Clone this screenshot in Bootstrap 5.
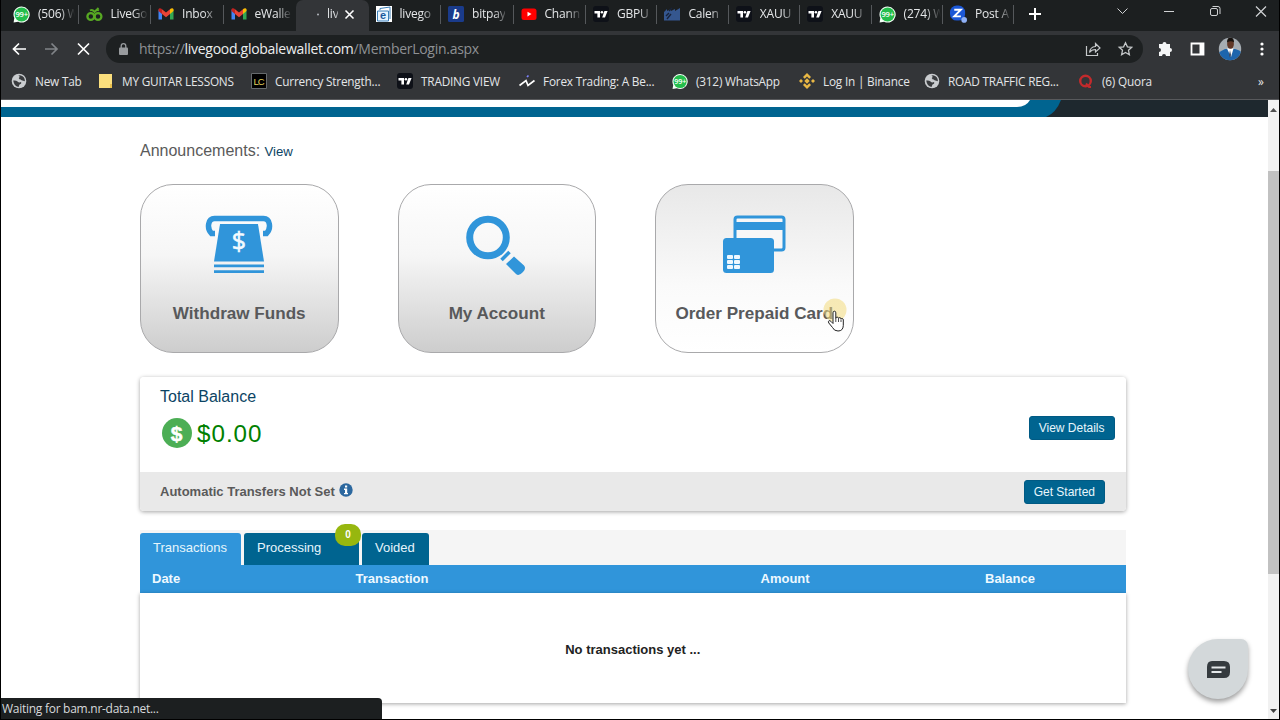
<!DOCTYPE html>
<html lang="en">
<head>
<meta charset="utf-8">
<title>eWallet</title>
<link href="https://cdn.jsdelivr.net/npm/bootstrap@5.3.0/dist/css/bootstrap.min.css" rel="stylesheet">
<style>
html,body{height:720px;overflow:hidden}
body{background:#000;font-family:"Liberation Sans",Arial,sans-serif;color:#5a5a5a;line-height:1.2}
.win{width:1278px;height:719px;margin-left:1px;background:#fff}
.chrome{font-family:"Open Sans","Noto Sans",sans-serif;color:#e4e6e8;background:#333538;height:99px}
.chrome svg,.chrome .ico{flex:none}
.strip{height:31px;background:#1c1f20;padding-left:5px}
.btab{width:72.5px;height:31px;padding-left:7px;gap:8px;font-size:12px;letter-spacing:-.2px;position:relative;flex:none;padding-bottom:3px}
.btab:nth-child(n+9){width:71.4px}
.btab .ttl{white-space:nowrap;-webkit-mask-image:linear-gradient(90deg,#000 22px,transparent 37px);mask-image:linear-gradient(90deg,#000 22px,transparent 37px)}
.btab.sep::after{content:"";position:absolute;right:0;top:5px;width:1px;height:19px;background:#55585b}
.btab.on{background:#333538;border-radius:7px 7px 0 0}
.btab.on .ttl{margin-right:-2px;-webkit-mask-image:linear-gradient(90deg,#000 7px,transparent 17px);mask-image:linear-gradient(90deg,#000 7px,transparent 17px)}
.omni{height:35px;padding-top:1px}
.url{width:1037px;height:28px;border-radius:14px;background:#1d2021;margin-left:15px;font-size:14px;padding:0 10px 0 13px;color:#8e9194}
.url .addr{letter-spacing:-.28px;margin-left:11px;white-space:nowrap}
.url b{font-weight:400;color:#eceeef}
.marks{height:33px;padding:0 0 3px 10px;display:grid;grid-template-columns:87px 153px 146px 122px 153px 127px 125px 154px 180px auto;align-items:center;font-size:11.8px;white-space:nowrap;letter-spacing:-.2px}
.bm{display:flex;align-items:center}
.bm svg{width:16px;margin-right:8px}
.edge{height:1px;background:#58595c}
.view{height:619px}
.banner{height:17px;display:block}
.banner .night{fill:#1e282e}
.site{width:985.5px;margin-left:139px}
.ann{height:67px;padding-top:24px;font-size:16px}
.lnk{font-size:13.2px;color:#0c4464;text-decoration:none}
.tile{width:198.5px;height:169px;border:1px solid #a9a9ab;border-radius:33px;background:linear-gradient(#fff,#f6f6f6 42%,#cdcdcd);padding-top:29px;font-weight:700;font-size:17.1px;white-space:nowrap;color:#58595b}
.tile.flip{background:linear-gradient(#e8e8e8,#fafafa 60%,#fff)}
.tile svg{height:62px;display:block;margin-bottom:28px;margin-left:-1px}
.bal{margin-top:24px;height:134px;border-radius:4px;box-shadow:0 1px 4px rgba(0,0,0,.36);overflow:hidden}
.bal .up{height:95px;padding:10px 11px 0 20px;background:#fff}
.bal .low{height:39px;padding:1px 20.500px 0 20px;background:#e9e9e9;font-size:13px;font-weight:700}
.money{font-size:24.2px;letter-spacing:1px;color:#008000;gap:5px;margin-top:12px;margin-left:2px}
.pill{--bs-btn-bg:#006490;--bs-btn-color:#e8f6fc;--bs-btn-border-color:#005a84;--bs-btn-hover-bg:#006490;padding:0 9px;font-size:12px;line-height:21px;border-radius:3px;height:24px}
.details{margin-top:29px}
.txn{margin-top:19px}
.tabsrow{background:#f5f5f5;height:35px;padding-top:3px;gap:3px}
.nt{height:32px;background:#006490;color:#e6f5fc;font-size:13px;padding-left:13px;padding-top:7px;border-radius:3px 3px 0 0;position:relative}
.nt.cur{background:#3095da}
.cnt{position:absolute;right:-2px;top:-9px;width:26px;height:22px;border-radius:10px;background:#97b70f;color:#fff;font-size:10px;font-weight:700;text-align:center;line-height:22px}
.th-row{height:28px;background:#3095da;color:#eef9ff;font-weight:700;font-size:13px;display:grid;grid-template-columns:203.5px 405px 224.5px auto;align-items:center;padding-left:12px}
.empty{height:110px;font-size:13px;font-weight:700;color:#222;padding-top:49px;box-shadow:0 1px 4px rgba(0,0,0,.36);text-align:center}
.sbar{width:11px;background:#f1f1f1;padding-top:6px}
.thumb{height:403px;background:#c1c1c1;margin-top:57px}
.status{position:absolute;left:1px;top:698px;width:381px;height:21px;background:#1c1f20;color:#d8dadc;border-radius:0 4px 0 0;font:12px/22px "Open Sans","Noto Sans",sans-serif;padding-left:1px;letter-spacing:-.27px}
.chat{position:absolute;left:1188px;top:639px;width:60px;height:60px;border-radius:30px 7px 30px 30px;background:#d3d8da;box-shadow:0 3px 5px rgba(0,0,0,.38);padding-top:2px}
.hand{position:absolute;left:823px;top:298px}
</style>
</head>
<body>
<svg width="0" height="0" class="position-absolute">
<defs>
<symbol id="wa" viewBox="0 0 17 16"><path d="M8.5 0a8 8 0 1 1-3.3 15.2L.6 16l.7-4.4A8 8 0 0 1 8.5 0z" fill="#f4fff6"/><circle cx="8.6" cy="8" r="7" fill="#24bd4c"/><text x="8.7" y="10.800" font-family="Open Sans" font-size="7.6" font-weight="600" text-anchor="middle" textLength="12.500" fill="#fff">99+</text></symbol>
<symbol id="gm" viewBox="0 0 16 16"><path d="M.5 3.5v10H4V7z" fill="#4285f4"/><path d="M15.5 3.500v10H12V7z" fill="#34a853"/><path d="M.5 5V3.500Q1 1.500 3 2.500L4 3.300V8z" fill="#c5221f"/><path d="M15.500 5V3.500Q15 1.500 13 2.500L12 3.300V8z" fill="#fbbc04"/><path d="M4 3.300 8 6.500l4-3.200V8l-4 3.200L4 8z" fill="#ea4335"/></symbol>
<symbol id="tv" viewBox="0 0 16 16"><rect width="16" height="16" rx="3" fill="#0e1118"/><path d="M1.500 5h5.500v6.500H4.400V7.500H1.500zM11.400 5h3.200L12 11.500H9.200z" fill="#fff"/><circle cx="8.900" cy="6.300" r="1.300" fill="#fff"/></symbol>
<symbol id="gl" viewBox="0 0 16 16"><circle cx="8" cy="8" r="7.300" fill="#c9cccf"/><path d="M2.200 7.500Q5 7 6.500 8.500T10 9q1 1.500-1.500 2.500L7.500 14Q3 13 2.200 7.500zM7 2.300q2 .2 1.500 2Q7 5 8.500 6.300q1.500 0 2 1l3.400 1Q14 3 9 2.200z" fill="#393b3e"/></symbol>
</defs></svg>

<div class="win">
<header class="chrome">
<div class="strip d-flex">
<div class="btab sep d-flex align-items-center"><svg width="17" height="17"><use href="#wa"/></svg><span class="ttl">(506) W</span></div>
<div class="btab sep d-flex align-items-center"><svg width="17" height="16" viewBox="0 0 17 16" fill="none" stroke="#57a823" stroke-width="2.300"><circle cx="4.800" cy="10.500" r="3.400"/><circle cx="12" cy="10.500" r="3.400"/><path d="M4 4.500q2.500-1.500 4.500 1.500 2-3 4.500-1.500M8.500 6 12.500 2" stroke-width="1.800"/></svg><span class="ttl">LiveGo</span></div>
<div class="btab sep d-flex align-items-center"><svg width="16" height="16"><use href="#gm"/></svg><span class="ttl">Inbox</span></div>
<div class="btab d-flex align-items-center"><svg width="16" height="16"><use href="#gm"/></svg><span class="ttl">eWalle</span></div>
<div class="btab on d-flex align-items-center"><svg width="16" height="16" viewBox="0 0 16 16"><circle cx="15" cy="8.500" r="1" fill="#b4b8bd"/></svg><span class="ttl">liv</span><svg width="11" height="11" viewBox="0 0 11 11" stroke="#fff" stroke-width="1.600"><path d="M1.500 1.500l8 8M9.500 1.500l-8 8"/></svg></div>
<div class="btab sep d-flex align-items-center"><svg width="16" height="16" viewBox="0 0 16 16"><path fill="#fff" d="M0 0h16v16H0z"/><path d="M1.500 5h11v10h-11z" fill="#e6f3fd" stroke="#3a7fb8"/><path d="M4 4V2.500L14 1v12" fill="none" stroke="#3a7fb8"/><text x="7" y="13" font-size="11" font-weight="700" text-anchor="middle" fill="#1c5a9c" font-family="Liberation Sans">e</text></svg><span class="ttl">livego</span></div>
<div class="btab sep d-flex align-items-center"><svg width="16" height="16" viewBox="0 0 16 16"><rect width="16" height="16" rx="1.500" fill="#1a3b8b"/><text x="8" y="12.500" font-size="12" font-weight="700" font-style="italic" text-anchor="middle" fill="#fff" font-family="Open Sans">b</text></svg><span class="ttl">bitpay</span></div>
<div class="btab sep d-flex align-items-center"><svg width="16" height="16" viewBox="0 0 16 16"><rect x=".5" y="2.500" width="15" height="11.500" rx="2.500" fill="#f00"/><path d="M6.500 5.700v4.800l4-2.400z" fill="#fff"/></svg><span class="ttl">Chann</span></div>
<div class="btab sep d-flex align-items-center"><svg width="16" height="16"><use href="#tv"/></svg><span class="ttl">GBPU</span></div>
<div class="btab sep d-flex align-items-center"><svg width="16" height="16" viewBox="0 0 16 16"><path d="M0 14.500V6l3-3v2l4-2v2l4-2v2l5-3v12.500z" fill="#35578f"/><path d="M2 10l3-3M5 5l3-3M3 13l4-5" stroke="#18233b" stroke-width="1.400"/></svg><span class="ttl">Calen</span></div>
<div class="btab sep d-flex align-items-center"><svg width="16" height="16"><use href="#tv"/></svg><span class="ttl">XAUU</span></div>
<div class="btab sep d-flex align-items-center"><svg width="16" height="16"><use href="#tv"/></svg><span class="ttl">XAUU</span></div>
<div class="btab sep d-flex align-items-center"><svg width="17" height="17"><use href="#wa"/></svg><span class="ttl">(274) W</span></div>
<div class="btab sep d-flex align-items-center"><svg width="17" height="18" viewBox="0 0 18 18"><rect width="16" height="16" rx="7" fill="#1b57d6"/><path d="M4.500 4.500h7L4.500 11.500h7" fill="none" stroke="#fff" stroke-width="2"/><circle cx="15" cy="15.300" r="3" fill="#8fb0f5"/></svg><span class="ttl">Post A</span></div>
<svg class="ms-2" width="255" height="28" viewBox="0 0 255 28" fill="none" stroke="#d0d2d4" stroke-width="1"><path d="M7 14h12M13 8v12" stroke="#fff" stroke-width="2"/><path d="M95.500 8.500l5 5 5-5M142 11.500h10"/><rect x="188.500" y="8.500" width="7" height="7" rx="1.500"/><path d="M190.500 6.500h5.500q2 0 2 2V14"/><path d="M234 6.500l10 10M244 6.500l-10 10" stroke-width="1.200"/></svg>
</div>
<div class="omni d-flex align-items-center">
<svg width="90" height="20" viewBox="0 0 90 20" fill="none" stroke-width="1.700"><path d="M25 10H12.500M18 4.500 12.500 10l5.500 5.500" stroke="#fff"/><path d="M44 10h12M50.500 4.500 56 10l-5.500 5.500" stroke="#818488"/><path d="M77 4.500l11 11M88 4.500l-11 11" stroke="#fff"/></svg>
<div class="url d-flex align-items-center">
<svg width="9" height="12" viewBox="0 0 9 12"><rect y="4.500" width="9" height="7.500" rx="1" fill="#989b9e"/><path d="M2.200 5V3a2.300 2.300 0 0 1 4.600 0v2" fill="none" stroke="#989b9e" stroke-width="1.300"/></svg>
<span class="addr">https://<b>livegood.globalewallet.com</b>/MemberLogin.aspx</span>
<svg class="ms-auto" width="48" height="16" viewBox="0 0 48 16" fill="none" stroke="#c5c8ca" stroke-width="1.200"><path d="M1.500 5v9.500h11V12M4.500 11.500Q5 6 10.500 5.500V2.500l4.500 4.500-4.500 4V8.500Q6.500 8.500 4.500 11.500z"/><path d="M40.500 1.700l1.900 4.100 4.400.5-3.300 3 .9 4.400-3.900-2.200-3.900 2.200.9-4.400-3.300-3 4.400-.5z" stroke-width="1.300"/></svg>
</div>
<svg width="126" height="26" viewBox="0 0 126 26"><path d="M16 8h3.500a2 2 0 1 1 4 0H27v4a2 2 0 1 1 0 4v4h-4a2 2 0 0 0-4 0h-3v-4a2 2 0 1 0 0-4V8z" fill="#f4f5f6"/><path d="M48.500 7.500h12v11h-12z" fill="none" stroke="#fff" stroke-width="1.800"/><path d="M56.500 7h4.500v12h-4.500z" fill="#fff"/><clipPath id="av"><circle cx="87" cy="13" r="11.200"/></clipPath><g clip-path="url(#av)"><path d="M75 1h24v24H75z" fill="#a6adb3"/><path d="M75 25V17q3-2 7-4h10q5 1 7 4v8z" fill="#1d65ad"/><path d="M84 12.500h6.500L88 21z" fill="#fff"/><path d="M87 14l1 5-1 3-1-3z" fill="#3b4b66"/><ellipse cx="87.500" cy="8" rx="3.400" ry="4.800" fill="#603727"/><path d="M84 6.500q0-5 3.500-5T91 6.500q-3-2.500-7 0z" fill="#17120f"/></g><g fill="#fff"><circle cx="119" cy="8" r="1.600"/><circle cx="119" cy="13" r="1.600"/><circle cx="119" cy="18" r="1.600"/></g></svg>
</div>
<div class="marks">
<span class="bm"><svg height="16"><use href="#gl"/></svg>New Tab</span>
<span class="bm"><svg height="16" viewBox="0 0 16 16"><path d="M1 1h13v14H1z" fill="#fbdf7d"/><path d="M12 15v-4h2v4z" fill="#e9c04d"/></svg>MY GUITAR LESSONS</span>
<span class="bm"><svg height="16" viewBox="0 0 16 16"><path d="M.5.500h15v15H.5z" fill="#000" stroke="#666a6d"/><text x="8" y="11.500" font-size="9.500" text-anchor="middle" textLength="11" fill="#e2d35d" font-family="Liberation Sans">LC</text></svg>Currency Strength...</span>
<span class="bm"><svg height="16"><use href="#tv"/></svg>TRADING VIEW</span>
<span class="bm"><svg height="16" viewBox="0 0 16 16" fill="none" stroke="#fff" stroke-width="1.700"><path d="M.5 12.500 7 7.500l2 5 6.500-5"/><path d="M8 4l1.500-1.500" stroke="#7d83ff"/></svg>Forex Trading: A Be...</span>
<span class="bm"><svg height="17"><use href="#wa"/></svg>(312) WhatsApp</span>
<span class="bm"><svg height="16" viewBox="0 0 16 16" fill="#e9b844"><path d="M8 0l4 4-1.700 1.700L8 3.400 5.700 5.700 4 4zM2 6l2 2-2 2-2-2zM14 6l2 2-2 2-2-2zM8 16l-4-4 1.700-1.700L8 12.600l2.300-2.300L12 12zM8 5.300 10.700 8 8 10.700 5.300 8z"/></svg>Log In | Binance</span>
<span class="bm"><svg height="16"><use href="#gl"/></svg>ROAD TRAFFIC REG...</span>
<span class="bm"><svg height="16" viewBox="0 0 16 16" fill="none" stroke="#c22a2c"><circle cx="7.500" cy="8" r="5.300" stroke-width="2.400"/><path d="M8 10.500l3 3.500h2" stroke-width="2"/></svg>(6) Quora</span>
<span>»</span>
</div>
</header>
<div class="edge"></div>
<div class="view d-flex">
<main class="flex-grow-1">
<svg class="banner" width="1267" height="17" viewBox="0 0 1267 17"><path class="night" d="M0 0h1267v17H1040z"/><path d="M0 0h1060Q1055 13 1045 17H0z" fill="#006490"/><path d="M0 0h1029q-4 7-13 7H0z" fill="#fff"/></svg>
<div class="site">
<div class="ann">Announcements: <a class="lnk" href="#">View</a></div>
<div class="d-flex" style="gap:59px">
<div class="tile d-flex flex-column align-items-center">
<svg width="72" viewBox="0 0 72 62"><path d="M12 19.500H8.500C3.500 14 5 4.500 11.500 4.500h49c6.500 0 8 9.500 3 15H60" fill="none" stroke="#3095da" stroke-width="5.500"/><path d="M17 10h38l6 37.500H11z" fill="#3095da"/><path d="M16 9l-3 14M56 9l3 14" stroke="#fafafa" stroke-width="1.500"/><path d="M11 50.500h50v2.700H11zM11 56.300h50V59H11z" fill="#3095da"/><text x="36" y="36" font-size="25" font-weight="400" text-anchor="middle" fill="#f4fbff" stroke="#f4fbff" stroke-width=".6" font-family="Open Sans">$</text></svg>Withdraw Funds</div>
<div class="tile d-flex flex-column align-items-center">
<svg width="62" viewBox="0 0 62 62"><g fill="none" stroke="#3095da"><circle cx="23" cy="23.500" r="18.300" stroke-width="7"/><path d="M36.500 46l8-8" stroke-width="3.500"/></g><path d="M49 42.500l10 9q2.500 3-1 6.500-4 4.500-7 2L41 50z" fill="#3095da"/></svg>My Account</div>
<div class="tile flip d-flex flex-column align-items-center">
<svg width="64" viewBox="0 0 64 62"><rect x="13" y="3" width="49" height="33" rx="2.500" fill="#f7f7f7" stroke="#3095da" stroke-width="3"/><path d="M13 8h49v8H13z" fill="#3095da"/><rect x="1" y="24" width="51" height="35" rx="3.500" fill="#3095da"/><g fill="#eef8ff"><rect x="5" y="41" width="6" height="4" rx="1"/><rect x="12" y="41" width="6" height="4" rx="1"/><rect x="5" y="46" width="6" height="4" rx="1"/><rect x="12" y="46" width="6" height="4" rx="1"/><rect x="5" y="51" width="6" height="4" rx="1"/><rect x="12" y="51" width="6" height="4" rx="1"/></g></svg>Order Prepaid Card</div>
</div>
<section class="bal">
<div class="up d-flex justify-content-between align-items-start"><div><a class="lnk fs-6" href="#">Total Balance</a>
<div class="money d-flex align-items-center"><svg width="30" height="30" viewBox="0 0 30 30"><circle cx="15" cy="15" r="15" fill="#4cae55"/><text x="15" y="22.500" font-size="21" font-weight="700" text-anchor="middle" fill="#fff" stroke="#fff" stroke-width=".5" font-family="Liberation Sans">$</text></svg>$0.00</div></div>
<button class="btn pill details">View Details</button></div>
<div class="low d-flex justify-content-between align-items-center"><span>Automatic Transfers Not Set <svg width="14" height="14" viewBox="0 0 14 14" style="margin:-6px 0 0 1px"><circle cx="7" cy="7" r="6.700" fill="#2c689f"/><path d="M6 2.500h2.200v2H6zM5 5.500h3.200V10H9v1.300H5V10h1V7H5z" fill="#fff"/></svg></span><button class="btn pill">Get Started</button></div>
</section>
<section class="txn">
<div class="tabsrow d-flex"><div class="nt cur" style="width:101px">Transactions</div><div class="nt" style="width:115px">Processing<span class="cnt">0</span></div><div class="nt" style="width:67px">Voided</div></div>
<div class="th-row"><span>Date</span><span>Transaction</span><span>Amount</span><span>Balance</span></div>
<div class="empty">No transactions yet ...</div>
</section>
</div>
</main>
<aside class="sbar"><svg class="d-block mx-auto" width="7" height="8" viewBox="0 0 7 8"><path d="M0 6l3.500-4L7 6z" fill="#505050"/></svg><div class="thumb"></div><svg class="d-block mx-auto" style="margin-top:133px" width="7" height="8" viewBox="0 0 7 8"><path d="M0 2l3.500 4L7 2z" fill="#404040"/></svg></aside>
</div>
</div>
<div class="status">Waiting for bam.nr-data.net...</div>
<div class="chat d-flex align-items-center justify-content-center"><svg width="23" height="18" viewBox="0 0 23 18"><path d="M5 0h12q6 0 6 6v5q0 6-6 6H0V6Q0 0 5 0z" fill="#353b3f"/><path d="M4.500 6.500h14M4.500 11h10" stroke="#e4e8ea" stroke-width="1.900"/></svg></div>
<svg class="hand" width="26" height="36" viewBox="0 0 26 36"><circle cx="12" cy="12" r="11.500" fill="#f3da7c" opacity=".55"/><path d="M10 14.800q0-1.600 1.400-1.600t1.400 1.600v5.400q.2-1.200 1.400-1.100 1.300.1 1.300 1.400.2-1 1.400-.8 1.200.1 1.200 1.400.3-.8 1.200-.6 1 .2 1 1.500v5.500q-.2 5.500-5.300 5.500-4 0-5.500-3.500L5.800 25q-.9-1.500.1-2.200 1-.6 2 .5l2.100 2.200z" fill="#fff" stroke="#222" stroke-width="1"/><path d="M12.800 20v4M15.500 21v3M18 21.500V24" stroke="#222" stroke-width=".8"/></svg>
</body>
</html>
